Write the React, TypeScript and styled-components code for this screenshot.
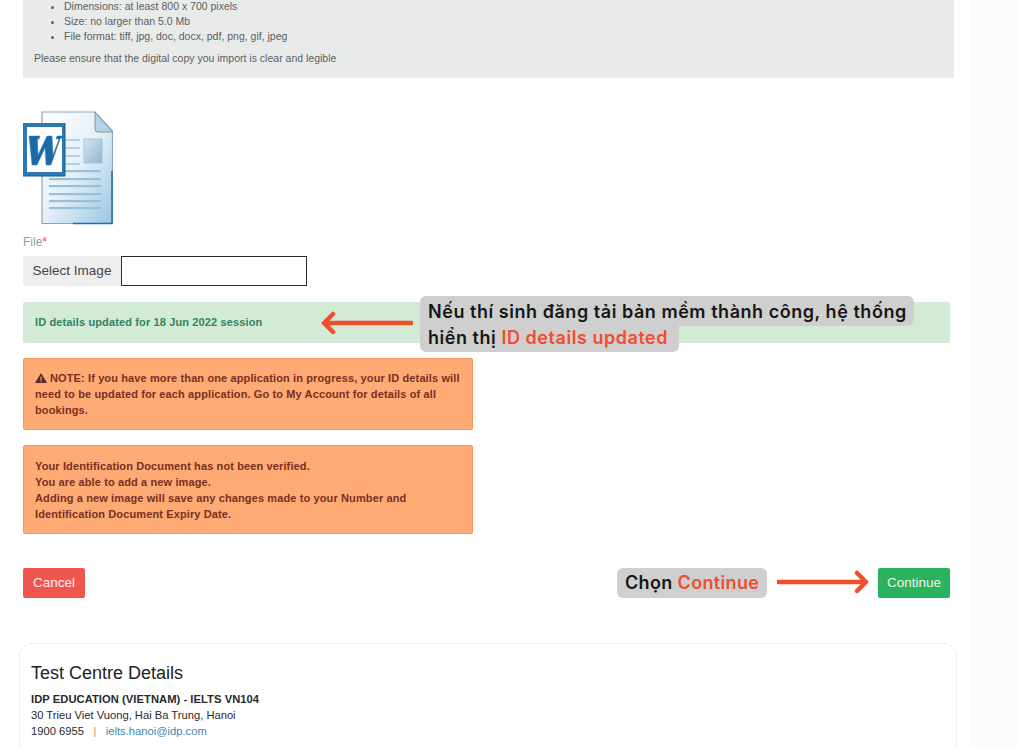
import React from "react";
import styled, { createGlobalStyle } from "styled-components";

const Global = createGlobalStyle`
  html, body { margin: 0; padding: 0; height: 748px; overflow: hidden; background: #fdfdfd; }
  body { font-family: "Liberation Sans", Arial, sans-serif; color: #333; }
  #root { height: 748px; overflow: hidden; }
`;

const Page = styled.div`
  position: relative;
  width: 1018px;
  height: 748px;
  overflow: hidden;
  background: linear-gradient(90deg, #fcfdfd 0, #fcfdfd 8px, #fff 8px, #fff 970px, #fbfcfc 970px);
`;
const Column = styled.main`
  display: flex;
  flex-direction: column;
  align-items: flex-start;
  padding-left: 23px;
  width: 931px;
`;
const InfoBox = styled.section`
  box-sizing: border-box;
  width: 931px;
  height: 78px;
  background: #e9ebeb;
  padding: 0 11px;
  font-size: 10.5px;
  line-height: 15px;
  color: #5a5f62;
`;
const InfoList = styled.ul`
  margin: -1px 0 0;
  padding: 0 0 0 30px;
  & li { height: 15px; }
`;
const InfoNote = styled.p`
  margin: 7px 0 0;
`;
const DocIcon = styled.svg`
  display: block;
  margin-top: 33px;
  width: 90px;
  height: 114px;
`;
const FileLabel = styled.label`
  margin-top: 9px;
  font-size: 12px;
  line-height: 16px;
  color: #9a9a9a;
  & span { color: #d9534f; }
`;
const FileRow = styled.div`
  display: flex;
  margin-top: 6px;
  height: 30px;
`;
const SelectAddon = styled.div`
  box-sizing: border-box;
  width: 98px;
  background: #eeeeee;
  border-radius: 3px 0 0 3px;
  font-size: 13.5px;
  line-height: 29px;
  text-align: center;
  color: #444;
`;
const FileInput = styled.div`
  box-sizing: border-box;
  width: 186px;
  background: #fff;
  border: 1px solid #2b2b2b;
`;
const SuccessAlert = styled.div`
  box-sizing: border-box;
  width: 927px;
  height: 41px;
  margin-top: 16px;
  padding-left: 12px;
  background: #d3ead5;
  border-radius: 2px;
  font-size: 11px;
  font-weight: 700;
  letter-spacing: 0.13px;
  line-height: 40px;
  color: #2f8560;
`;
const WarnAlert = styled.div<{ $mt: number; $h: number; $pt: number }>`
  box-sizing: border-box;
  width: 450px;
  height: ${(p) => p.$h}px;
  margin-top: ${(p) => p.$mt}px;
  padding: ${(p) => p.$pt}px 11px 0;
  background: #fdaa75;
  border: 1px solid #f79555;
  border-radius: 2px;
  font-size: 11px;
  font-weight: 700;
  letter-spacing: 0.12px;
  line-height: 16px;
  color: #7b2f1f;
`;
const Actions = styled.div`
  display: flex;
  justify-content: space-between;
  width: 927px;
  margin-top: 34px;
`;
const ActionButton = styled.button<{ $bg: string; $w: number }>`
  width: ${(p) => p.$w}px;
  height: 30px;
  padding: 0 0 2px;
  border: 0;
  border-radius: 2px;
  background: ${(p) => p.$bg};
  color: #f4f4f4;
  font-family: inherit;
  font-size: 13.5px;
`;
const Card = styled.section`
  box-sizing: border-box;
  width: 938px;
  height: 140px;
  margin: 45px 0 0 -4px;
  padding: 19px 11px;
  background: #fff;
  border: 1px solid #ededed;
  border-radius: 13px;
  font-size: 11.2px;
  line-height: 16px;
  color: #2a2a2a;
`;
const CardTitle = styled.h2`
  margin: 0 0 8px;
  font-size: 18px;
  font-weight: 400;
  line-height: 20px;
  color: #222;
`;
const CardLine = styled.div<{ $bold?: boolean }>`
  font-weight: ${(p) => (p.$bold ? 700 : 400)};
  letter-spacing: ${(p) => (p.$bold ? "0.05px" : "0")};
`;
const Sep = styled.span`
  margin: 0 9.5px;
  color: #e0954f;
`;
const Mail = styled.span`
  color: #3f83b5;
`;
const Callout = styled.div`
  position: absolute;
  left: 420px;
  top: 296px;
  font-family: "Inter", "Noto Sans", sans-serif;
  font-size: 18px;
  font-weight: 600;
  letter-spacing: 0.54px;
  color: #161616;
`;
const CalloutLine = styled.div<{ $w: number }>`
  box-sizing: border-box;
  width: ${(p) => p.$w}px;
  height: ${(p) => (p.$w > 300 ? 30 : 26)}px;
  padding-left: 8px;
  background: #cfcfcf;
  line-height: ${(p) => (p.$w > 300 ? 31 : 24)}px;
  white-space: nowrap;
  border-radius: ${(p) => (p.$w > 300 ? "6px 6px 6px 0" : "0 0 6px 6px")};
`;
const Red = styled.span`
  color: #f04e2d;
`;
const ChooseTag = styled.div`
  position: absolute;
  left: 617px;
  top: 568px;
  box-sizing: border-box;
  width: 150px;
  height: 30px;
  padding-left: 8px;
  background: #cfcfcf;
  border-radius: 6px;
  font-family: "Inter", "Noto Sans", sans-serif;
  font-size: 18px;
  font-weight: 600;
  letter-spacing: 0.35px;
  line-height: 30px;
  color: #161616;
  white-space: nowrap;
`;
const OverlayArrow = styled.svg<{ $x: number; $y: number; $w: number }>`
  position: absolute;
  left: ${(p) => p.$x}px;
  top: ${(p) => p.$y}px;
  width: ${(p) => p.$w}px;
  height: 24px;
`;

const WordIcon = () => (
  <DocIcon viewBox="0 0 90 114" aria-hidden="true">
    <defs>
      <linearGradient id="pg" x1="0" y1="0" x2="1" y2="1">
        <stop offset="0" stopColor="#ffffff" />
        <stop offset="0.5" stopColor="#e4f0f8" />
        <stop offset="1" stopColor="#9cc6e4" />
      </linearGradient>
      <linearGradient id="img" x1="0" y1="0" x2="1" y2="1">
        <stop offset="0" stopColor="#d5e5f0" />
        <stop offset="1" stopColor="#8fb6d2" />
      </linearGradient>
    </defs>
    <path d="M19 1H72L89.500 20V112.500H19Z" fill="url(#pg)" stroke="#8aa5b8" strokeWidth="1.200" />
    <path d="M89 60V112.500H50" fill="none" stroke="#1f6eb0" strokeWidth="1.500" />
    <path d="M72 1L89.500 21H75Q72 21 72 18Z" fill="#b6d3e6" stroke="#7e97a8" strokeWidth="1" />
    <rect x="61" y="28" width="18" height="24" fill="url(#img)" stroke="#a9c3d6" />
    {[28, 36, 44, 52].map((y) => (
      <rect key={y} x="42" y={y} width="15" height="2" fill="#b4d2e6" />
    ))}
    {[59, 67, 74, 82, 89, 96].map((y) => (
      <rect key={y} x="26" y={y} width="52" height="2.200" fill="#9cbfd8" />
    ))}
    <rect x="0" y="12" width="42" height="53" fill="#2a78b6" />
    <rect x="4" y="16" width="35" height="45" fill="#ffffff" />
    <path d="M6 25H17L16 28H14.500L15 44L24 25H29L30 44L36 28H33L34 25H42L37 28L28 54H23L22 37L14 54H9Z" fill="#1c6aa8" stroke="#3a82ba" strokeWidth="0.500" />
    <path d="M42 12V65H0" fill="none" stroke="#1a5d94" strokeWidth="1" />
  </DocIcon>
);

const WarnGlyph = () => (
  <svg width="12" height="10" viewBox="0 0 12 10" style={{ verticalAlign: "-1px", marginRight: 3 }} aria-hidden="true">
    <path d="M6 0L12 10H0Z" fill="#5a2a20" />
    <rect x="5.400" y="3.500" width="1.200" height="3.500" fill="#fdaa75" />
    <rect x="5.400" y="7.700" width="1.200" height="1.200" fill="#fdaa75" />
  </svg>
);

const Arrow = ({ x, y, w, left }: { x: number; y: number; w: number; left?: boolean }) => (
  <OverlayArrow $x={x} $y={y} $w={w} viewBox={`0 0 ${w} 24`} aria-hidden="true">
    {left ? (
      <path d={`M${w - 1} 12H3M12 3L3 12L12 21`} fill="none" stroke="#f04e2d" strokeWidth="4.500" strokeLinecap="round" strokeLinejoin="round" />
    ) : (
      <path d={`M1 12H${w - 3}M${w - 12} 3L${w - 3} 12L${w - 12} 21`} fill="none" stroke="#f04e2d" strokeWidth="4.500" strokeLinecap="round" strokeLinejoin="round" />
    )}
  </OverlayArrow>
);

export default function App() {
  return (
    <Page>
      <Global />
      <Column>
        <InfoBox>
          <InfoList>
            <li>Dimensions: at least 800 x 700 pixels</li>
            <li>Size: no larger than 5.0 Mb</li>
            <li>File format: tiff, jpg, doc, docx, pdf, png, gif, jpeg</li>
          </InfoList>
          <InfoNote>Please ensure that the digital copy you import is clear and legible</InfoNote>
        </InfoBox>
        <WordIcon />
        <FileLabel>
          File<span>*</span>
        </FileLabel>
        <FileRow>
          <SelectAddon>Select Image</SelectAddon>
          <FileInput />
        </FileRow>
        <SuccessAlert>ID details updated for 18 Jun 2022 session</SuccessAlert>
        <WarnAlert $mt={15} $h={72} $pt={11}>
          <WarnGlyph />
          NOTE: If you have more than one application in progress, your ID details will need to be updated for each application. Go to My Account for details of all bookings.
        </WarnAlert>
        <WarnAlert $mt={15} $h={89} $pt={12}>
          Your Identification Document has not been verified.
          <br />
          You are able to add a new image.
          <br />
          Adding a new image will save any changes made to your Number and Identification Document Expiry Date.
        </WarnAlert>
        <Actions>
          <ActionButton $bg="#f0564e" $w={62}>Cancel</ActionButton>
          <ActionButton $bg="#29b35c" $w={72}>Continue</ActionButton>
        </Actions>
        <Card>
          <CardTitle>Test Centre Details</CardTitle>
          <CardLine $bold>IDP EDUCATION (VIETNAM) - IELTS VN104</CardLine>
          <CardLine>30 Trieu Viet Vuong, Hai Ba Trung, Hanoi</CardLine>
          <CardLine>
            1900 6955<Sep>|</Sep>
            <Mail>ielts.hanoi@idp.com</Mail>
          </CardLine>
        </Card>
      </Column>
      <Callout>
        <CalloutLine $w={494}>Nếu thí sinh đăng tải bản mềm thành công, hệ thống</CalloutLine>
        <CalloutLine $w={259}>
          hiển thị <Red>ID details updated</Red>
        </CalloutLine>
      </Callout>
      <ChooseTag>
        Chọn <Red>Continue</Red>
      </ChooseTag>
      <Arrow x={321} y={311} w={92} left />
      <Arrow x={777} y={570} w={92} />
    </Page>
  );
}
